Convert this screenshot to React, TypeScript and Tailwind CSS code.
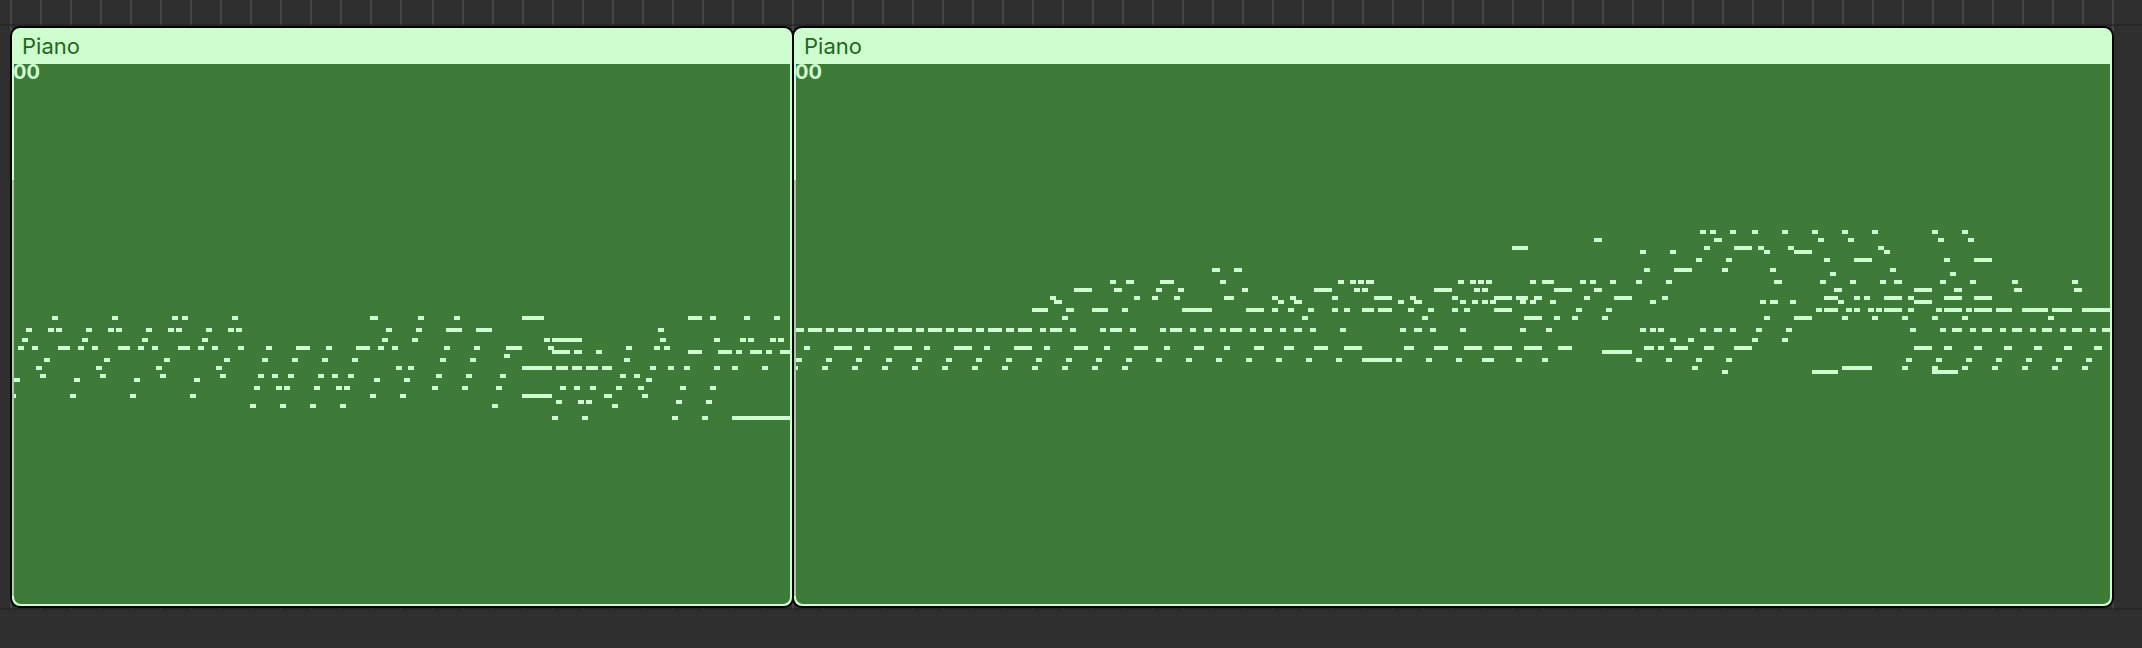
type Note = number | [start: number, length: number];
type Row = [pitchY: number, notes: Note[]];

const NOTE_LENGTH = 3;
const NOTE_HEIGHT = 2;

const firstTake: Row[] = [
  [158, [26, 56, 86, 91, 116, [185, 4], 209, 227, [261, 11], [344, 7], 355, 372, 387]],
  [164, [13, 24, 28, 43, 54, 58, 73, 84, 88, 103, 114, 118, 193, 208, [223, 8], [238, 8], 329]],
  [169, [11, 41, 71, 101, 191, 206, 272, [276, 15], 330, 357, 370, 374, 385, 389]],
  [173, [9, 16, [29, 6], 39, 46, [59, 6], 69, 76, [89, 6], 99, 106, 119, 133, [148, 7], 163, [178, 7], 189, 196, 222, 237, [253, 8], 274, 313, 327, 332]],
  [175, [[276, 9], [287, 4], 298, [344, 7], [359, 7], 368, [375, 6], 383, [390, 5]]],
  [177, [252]],
  [179, [22, 52, 82, 112, 131, 146, 161, 176, 220, 235, 312]],
  [183, [18, 48, 78, 108, 198, 204, [261, 15], [278, 6], [286, 5], [293, 6], [301, 5], 325, 334, 342, 357, 366, 381]],
  [187, [20, 50, 80, 110, 129, 136, 144, 159, 166, 174, 218, 233, 250, 310, 317]],
  [189, [7, 37, 67, 97, 187, 202, 323]],
  [193, [127, 138, 142, 157, 168, 172, 216, 231, 248, 280, 287, 295, 308, 319, 340, 355]],
  [197, [[6, 2], 35, 65, 95, 185, 200, [261, 15], [302, 4], 321]],
  [200, [278, 289, 293, 338, 353]],
  [202, [125, 140, 155, 170, 246, 306]],
  [208, [276, 291, 336, 351, [366, 29]]],
];

const secondTake: Row[] = [
  [115, [850, 855, 865, 876, 891, 906, 921, 936, 966, 981]],
  [119, [[797, 4], [857, 4], 909, 924, 969, 984]],
  [123, [[756, 8], 852, [867, 9], 879, 894, 939]],
  [125, [820, 835, 882, [897, 9], 942]],
  [129, [848, 863, 912, [927, 9], 972, [987, 9]]],
  [134, [[606, 4], [617, 4], 822, [837, 9], 861, 885, 945]],
  [136, [915, 975]],
  [140, [555, [563, 4], [580, 7], 610, 669, 675, 679, [683, 4], 729, 735, 739, 743, 765, [771, 6], 790, 795, 805, 818, 833, [887, 4], 910, 925, 940, [947, 4], 970, 985, 1006, 1036]],
  [144, [[537, 9], [557, 4], 578, 589, 621, [657, 9], 677, 681, [717, 9], 737, 741, [777, 9], [797, 4], [917, 4], [957, 9], [977, 4], [1007, 4], [1037, 4]]],
  [148, [525, 567, 576, 587, [612, 5], 636, 645, 666, [687, 9], 705, 726, [747, 9], [758, 6], [767, 4], 792, [807, 9], 831, [912, 7], 927, 932, [942, 9], 954, [972, 9], [987, 9]]],
  [150, [[527, 4], 639, [647, 4], 699, [707, 4], 730, 736, 741, 745, 760, 765, 775, 825, 880, [885, 4], 895, 919, [957, 9]]],
  [154, [[516, 8], [533, 4], [546, 8], 561, [591, 15], [623, 9], 636, 644, 654, 666, 672, [681, 6], [689, 7], 704, 714, 726, 732, [747, 9], 788, 803, 908, [912, 7], 923, 927, 934, 938, [942, 9], 954, 968, [972, 9], 983, [987, 9], [998, 8], [1011, 13], [1026, 10], [1041, 14]]],
  [158, [531, 651, 711, [762, 9], 777, 786, 801, 882, [897, 9], 921, 936, 951, 966, 981, 1024]],
  [164, [[397, 5], [404, 7], [413, 4], [419, 7], [428, 4], [434, 7], [443, 4], [449, 7], [458, 4], [464, 7], [473, 4], [479, 7], [488, 4], [494, 7], [503, 4], [509, 7], 520, [525, 6], 535, 550, [555, 6], 565, 580, [585, 6], 595, [602, 4], 610, [615, 6], 625, [632, 4], 640, [647, 4], 655, 670, 700, [707, 4], 715, 730, 760, 773, 820, 825, 829, 850, [857, 4], 865, 878, 893, 955, 970, [976, 5], 985, [991, 5], 1000, [1006, 5], 1015, [1021, 5], 1030, [1036, 5], 1045, [1051, 4]]],
  [169, [835, 844, 876, 891]],
  [173, [402, [417, 9], 432, [447, 9], 462, [477, 9], 492, [507, 9], 522, [537, 7], 552, [567, 7], 582, [597, 5], 612, [627, 5], [642, 5], [657, 7], [672, 9], [702, 5], [717, 7], [732, 9], [747, 9], [762, 9], [779, 7], [822, 5], 829, [837, 7], [852, 5], [867, 9], [957, 9], [972, 4], [987, 4], [1002, 4], [1017, 4], [1032, 4], [1047, 4]]],
  [175, [[801, 15]]],
  [179, [398, 413, 428, 443, 458, 473, 488, 503, 518, 533, 548, 563, 578, 593, 608, 623, 638, 653, 668, [681, 15], 698, 713, 728, [741, 6], 758, 771, 818, 833, 848, 863, 953, 968, 983, 998, 1013, 1028, 1043]],
  [183, [[397, 2], 411, 426, 441, 456, 471, 486, 501, 516, 531, 546, 561, 846, [921, 15], 951, 966, 981, 996, 1011, 1026, 1041]],
  [185, [861, [906, 13], [966, 13]]],
];

function NoteMap({ rows, viewBox }: { rows: Row[]; viewBox: string }) {
  return (
    <svg
      viewBox={viewBox}
      preserveAspectRatio="none"
      shapeRendering="crispEdges"
      className="block h-[540px] w-full fill-[#cefdd0]"
      aria-hidden="true"
    >
      {rows.map(([y, notes]) =>
        notes.map((note) => {
          const [x, length] = typeof note === "number" ? [note, NOTE_LENGTH] : note;
          return <rect key={`${y}-${x}`} x={x} y={y} width={length} height={NOTE_HEIGHT} />;
        }),
      )}
    </svg>
  );
}

function Region({ rows, viewBox, className }: { rows: Row[]; viewBox: string; className: string }) {
  return (
    <article className={`min-w-0 rounded-[10px] border-2 border-black bg-[#cefdd0] ${className}`}>
      <h2 className="flex h-9 items-center px-2.5 text-[22px] leading-9 text-[#26671b]">Piano</h2>
      <div className="flex pr-0.5 pb-0.5">
        <div className="flex w-0.5 flex-col">
          <div className="h-[116px]" />
          <div className="mb-2 flex-1 bg-[#a5cba5]" />
        </div>
        <div className="relative min-w-0 flex-1 rounded-b-[7px] bg-[#3e7b39]">
          <span className="absolute top-0 -left-px text-[20px] leading-4 font-bold text-[#cefdd0]">00</span>
          <NoteMap rows={rows} viewBox={viewBox} />
        </div>
      </div>
    </article>
  );
}

const bars = Array.from({ length: 71 }, (_, i) => i);

function BarLines() {
  return (
    <div className="absolute inset-0 flex overflow-hidden pl-2.5" aria-hidden="true">
      {bars.map((bar) => (
        <div
          key={bar}
          className={`shrink-0 border-l-2 border-[#454545] ${bar === 13 ? "w-8" : "w-[30px]"}`}
        />
      ))}
    </div>
  );
}

export default function App() {
  return (
    <div className="min-h-screen bg-[#2f2f2f] font-['Inter',sans-serif]">
      <main className="relative">
        <BarLines />
        <div className="relative h-6" />
        <div className="relative border-y-2 border-[#232323]/60 pr-7 pl-2.5">
          <div className="flex">
            <Region rows={firstTake} viewBox="7 32 388 270" className="grow-[780] basis-0" />
            <Region rows={secondTake} viewBox="398 32 657 270" className="-ml-0.5 grow-[1318] basis-0" />
          </div>
        </div>
      </main>
    </div>
  );
}
